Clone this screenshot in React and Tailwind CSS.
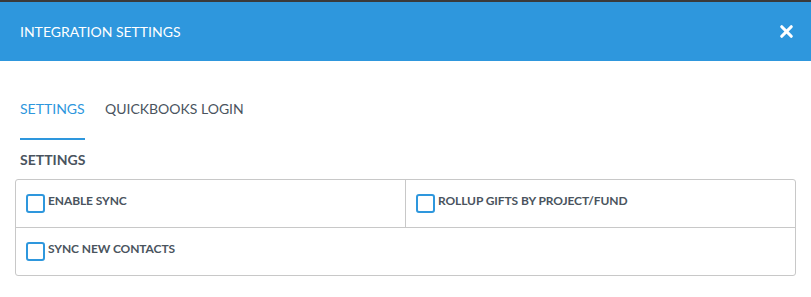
import { X } from "lucide-react"

function Check({ label }) {
  return (
    <label className="flex items-start gap-[3px] cursor-pointer">
      <span className="mt-[1px] block w-[19px] h-[19px] rounded-[3px] border-2 border-[#2e97dd] bg-white shrink-0"></span>
      <span className="text-[12px] font-bold text-[#4a545e] leading-[14px] tracking-[-0.1px] pt-[1px]">{label}</span>
    </label>
  )
}

export default function App() {
  return (
    <div className="w-[811px] h-[297px] bg-white font-['Lato','Open_Sans',sans-serif] overflow-hidden">
      <div className="h-[2px] bg-[#3a3a3a]"></div>
      <div className="h-[59px] bg-[#2e97dd] flex items-center justify-between pl-5 pr-[15px]">
        <span className="text-white text-[14px]">INTEGRATION SETTINGS</span>
        <X size={19} strokeWidth={4} className="text-white" />
      </div>

      <div className="px-5 pt-[38px] flex gap-5">
        <div className="flex flex-col">
          <span className="text-[#2e97dd] text-[14px] leading-[20px]">SETTINGS</span>
          <span className="mt-[19px] h-[2px] bg-[#2e97dd] w-[65px]"></span>
        </div>
        <span className="text-[#4a545e] text-[14px] leading-[20px]">QUICKBOOKS LOGIN</span>
      </div>

      <div className="px-5 pt-[10px] text-[14px] font-bold text-[#4a545e] leading-[20px]">SETTINGS</div>

      <div className="mx-[15px] mt-[9px] w-[781px] border border-[#c8c8c8] rounded-[3px]">
        <div className="grid grid-cols-[390px_1fr] h-[48px] border-b border-[#c8c8c8]">
          <div className="pl-[10px] pt-[13px] border-r border-[#c8c8c8]">
            <Check label="ENABLE SYNC" />
          </div>
          <div className="pl-[10px] pt-[13px]">
            <Check label="ROLLUP GIFTS BY PROJECT/FUND" />
          </div>
        </div>
        <div className="h-[47px] pl-[10px] pt-[13px]">
          <Check label="SYNC NEW CONTACTS" />
        </div>
      </div>
    </div>
  )
}
